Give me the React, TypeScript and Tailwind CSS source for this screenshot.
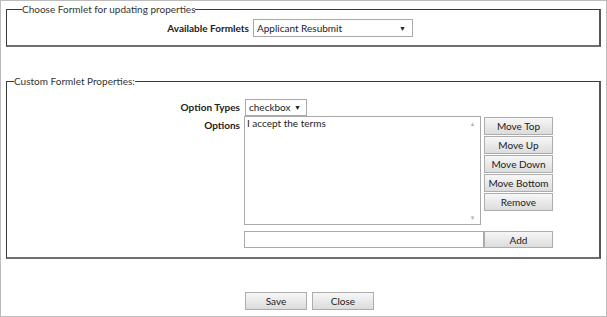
import React from 'react'

const font = { fontFamily: 'Lato, "Open Sans", sans-serif' }

function Btn({ label, w = 'w-[69px]', h = 'h-[18px]' }: { label: string; w?: string; h?: string }) {
  return (
    <button
      className={`${h} ${w} border border-[#adadad] bg-gradient-to-b from-[#f7f7f7] to-[#dcdcdc] text-[10px] leading-none text-[#222]`}
    >
      {label}
    </button>
  )
}

export default function App() {
  return (
    <div
      className="w-[607px] h-[317px] border border-[#bcbcbc] bg-white px-[5px] text-[#222]"
      style={font}
    >
      {/* formlet chooser */}
      <fieldset className="border-t border-l border-[#3a3a3a] border-r-2 border-b-2 border-r-[#555] border-b-[#6e6e6e] pb-[8px]">
        <legend className="ml-[15px] text-[10px] leading-[16px] text-[#333]">
          Choose Formlet for updating properties
        </legend>
        <div className="mt-[2px] flex items-center">
          <div className="w-[246px] pr-[4px] text-right text-[10px] font-bold">Available Formlets</div>
          <div className="flex h-[18px] w-[160px] items-center justify-between border border-[#a9a9a9] pl-[3px] pr-[6px] text-[10px]">
            <span>Applicant Resubmit</span>
            <span className="text-[7px]">▼</span>
          </div>
        </div>
      </fieldset>

      {/* custom properties */}
      <fieldset className="mt-[26px] border-t border-l border-[#3a3a3a] border-r-2 border-b-2 border-r-[#555] border-b-[#6e6e6e] pb-[9px]">
        <legend className="ml-[7px] text-[10px] leading-[16px] text-[#333]">Custom Formlet Properties:</legend>
        <div className="mt-[10px] flex items-center">
          <div className="w-[238px] pr-[5px] text-right text-[10px] font-bold">Option Types</div>
          <div className="flex h-[17px] w-[62px] items-center justify-between border border-[#a9a9a9] pl-[3px] pr-[5px] text-[10px]">
            <span>checkbox</span>
            <span className="text-[7px]">▼</span>
          </div>
        </div>
        <div className="flex">
          <div className="w-[237px] pr-[4px] pt-[2px] text-right text-[10px] font-bold">Options</div>
          <div className="flex h-[109px] w-[237px] border border-[#a9a9a9]">
            <div className="flex-1 pl-[2px] text-[10px] leading-[13px]">I accept the terms</div>
            <div className="flex w-[15px] flex-col items-center justify-between py-[2px] text-[6px] text-[#b5b5b5]">
              <span>▲</span>
              <span>▼</span>
            </div>
          </div>
          <div className="ml-[3px] mt-[1px] flex flex-col gap-[1px]">
            <Btn label="Move Top" />
            <Btn label="Move Up" />
            <Btn label="Move Down" />
            <Btn label="Move Bottom" />
            <Btn label="Remove" />
          </div>
        </div>
        <div className="mt-[6px] flex">
          <div className="w-[237px]" />
          <div className="h-[17px] w-[240px] border border-[#a9a9a9]" />
          <Btn label="Add" h="h-[17px]" />
        </div>
      </fieldset>

      {/* actions */}
      <div className="mt-[33px] flex gap-[5px] pl-[239px]">
        <Btn label="Save" w="w-[62px]" />
        <Btn label="Close" w="w-[62px]" />
      </div>
    </div>
  )
}
